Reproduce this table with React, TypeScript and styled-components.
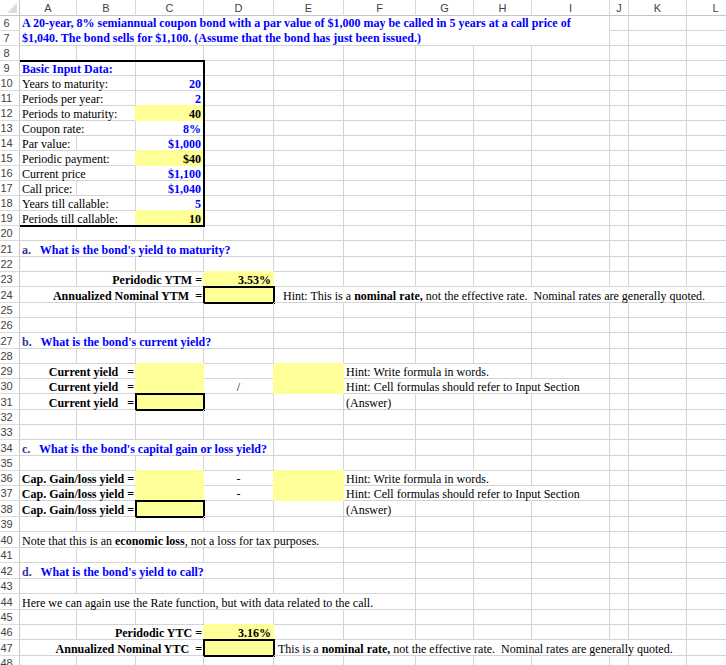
import React from "react";
import styled, { createGlobalStyle, css } from "styled-components";

const GlobalStyle = createGlobalStyle`
  html, body { margin: 0; padding: 0; background: #ffffff; }
  body { overflow: hidden; }
`;

const COLS = [57, 59, 68, 70, 70, 72, 58, 58, 78, 19, 58, 58];
const LETTERS = ["A", "B", "C", "D", "E", "F", "G", "H", "I", "J", "K", "L"];
const GRID = "#d4d4d4";
const YELLOW = "#ffff99";

type Tone = "blue" | "black";
type Align = "left" | "right" | "center";

interface CellSpec {
  span?: number;
  rowSpan?: number;
  text?: React.ReactNode;
  align?: Align;
  bold?: boolean;
  tone?: Tone;
  fill?: boolean;
  boxed?: boolean;
  pl?: number;
  pr?: number;
  wrap?: boolean;
}

interface RowSpec {
  n: number;
  h: number;
  start?: number;
  cells: CellSpec[];
}

const Viewport = styled.div`
  width: 726px;
  height: 665px;
  overflow: hidden;
  background: #ffffff;
`;

const Sheet = styled.div<{ $rows: string }>`
  display: grid;
  grid-template-columns: 20px ${COLS.map((c) => `${c}px`).join(" ")};
  grid-template-rows: 16px ${(p) => p.$rows};
  width: max-content;
  font-family: "Liberation Serif", "Times New Roman", serif;
  font-size: 12px;
  color: #000000;
`;

const Corner = styled.div`
  grid-row: 1;
  grid-column: 1;
  box-sizing: border-box;
  border-right: 1px solid #c6c6c6;
  border-bottom: 1px solid #c6c6c6;
  display: flex;
  align-items: flex-end;
  justify-content: flex-end;
  padding: 0 2px 2px 0;
`;

const Triangle = styled.div`
  width: 0;
  height: 0;
  border-left: 10px solid transparent;
  border-bottom: 10px solid #dcdcdc;
`;

const ColHead = styled.div<{ $col: number }>`
  grid-row: 1;
  grid-column: ${(p) => p.$col};
  box-sizing: border-box;
  border-right: 1px solid #d8d8d8;
  border-bottom: 1px solid #c6c6c6;
  display: flex;
  align-items: center;
  justify-content: center;
  font-family: "Liberation Sans", Arial, sans-serif;
  font-size: 11px;
  color: #444444;
`;

const RowHead = styled.div<{ $row: number }>`
  grid-row: ${(p) => p.$row};
  grid-column: 1;
  box-sizing: border-box;
  border-right: 1px solid #c6c6c6;
  border-bottom: 1px solid #dcdcdc;
  display: flex;
  align-items: center;
  justify-content: center;
  padding-right: 6px;
  font-family: "Liberation Sans", Arial, sans-serif;
  font-size: 11px;
  color: #444444;
`;

const Cell = styled.div<{
  $row: number;
  $col: number;
  $span: number;
  $rowSpan: number;
  $align: Align;
  $bold: boolean;
  $tone: Tone;
  $fill: boolean;
  $boxed: boolean;
  $pl: number;
  $pr: number;
  $wrap: boolean;
}>`
  grid-row: ${(p) => p.$row} / span ${(p) => p.$rowSpan};
  grid-column: ${(p) => p.$col} / span ${(p) => p.$span};
  box-sizing: border-box;
  min-width: 0;
  border-right: 1px solid ${GRID};
  border-bottom: 1px solid ${GRID};
  display: flex;
  align-items: ${(p) => (p.$wrap ? "flex-start" : "flex-end")};
  justify-content: ${(p) =>
    p.$align === "right" ? "flex-end" : p.$align === "center" ? "center" : "flex-start"};
  padding: 0 ${(p) => p.$pr}px 0 ${(p) => p.$pl}px;
  line-height: ${(p) => (p.$wrap ? "15px" : "12px")};
  white-space: ${(p) => (p.$wrap ? "normal" : "pre")};
  font-weight: ${(p) => (p.$bold ? "bold" : "normal")};
  color: ${(p) => (p.$tone === "blue" ? "#0000ff" : "#000000")};
  ${(p) =>
    p.$fill &&
    css`
      background: ${YELLOW};
      border-color: ${YELLOW};
      box-shadow: -1px 0 0 ${YELLOW}, 0 -1px 0 ${YELLOW};
    `}
  ${(p) =>
    p.$boxed &&
    css`
      outline: 2px solid #000000;
      outline-offset: -1px;
    `}
`;

const CellText = styled.span`
  display: block;
`;

const Strong = styled.b`
  font-weight: bold;
`;

const QLabel = styled.span`
  color: #333399;
`;

const InputFrame = styled.div`
  grid-row: 5 / 16;
  grid-column: 2 / 5;
  margin: -1px -1px -1px 0;
  border: 2px solid #000000;
  border-left: none;
  pointer-events: none;
`;

const q = (label: string, text: string, span: number): CellSpec => ({
  span,
  bold: true,
  tone: "blue",
  text: (
    <>
      <QLabel>{label}</QLabel>
      {"   " + text}
    </>
  ),
});

const inputRow = (n: number, label: string, value: string, labelSpan: number, computed = false): RowSpec => ({
  n,
  h: 15,
  cells: [
    { span: labelSpan, text: label },
    ...(labelSpan === 1 ? [{}] : []),
    computed
      ? { text: value, align: "right" as Align, bold: true, fill: true }
      : { text: value, align: "right" as Align, bold: true, tone: "blue" as Tone },
  ],
});

const eqLabel = (text: string, span: number): CellSpec => ({ span, text, align: "right", bold: true, pr: 1 });

const hintNominal = (prefix: string) => (
  <>
    {prefix}
    <Strong>nominal rate,</Strong>
    {" not the effective rate.  Nominal rates are generally quoted."}
  </>
);

const ROWS: RowSpec[] = [
  {
    n: 6,
    h: 15,
    cells: [
      {
        span: 9,
        rowSpan: 2,
        wrap: true,
        bold: true,
        tone: "blue",
        text:
          "A 20-year, 8% semiannual coupon bond with a par value of $1,000 may be called in 5 years at a call price of $1,040. The bond sells for $1,100. (Assume that the bond has just been issued.)",
      },
    ],
  },
  { n: 7, h: 15, start: 9, cells: [] },
  { n: 8, h: 15, cells: [] },
  { n: 9, h: 15, cells: [{ span: 2, text: "Basic Input Data:", bold: true, tone: "blue" }] },
  inputRow(10, "Years to maturity:", "20", 2),
  inputRow(11, "Periods per year:", "2", 2),
  inputRow(12, "Periods to maturity:", "40", 2, true),
  inputRow(13, "Coupon rate:", "8%", 2),
  inputRow(14, "Par value:", "$1,000", 1),
  inputRow(15, "Periodic payment:", "$40", 2, true),
  inputRow(16, "Current price", "$1,100", 2),
  inputRow(17, "Call price:", "$1,040", 1),
  inputRow(18, "Years till callable:", "5", 2),
  inputRow(19, "Periods till callable:", "10", 2, true),
  { n: 20, h: 15, cells: [] },
  { n: 21, h: 16, cells: [q("a.", "What is the bond's yield to maturity?", 4)] },
  { n: 22, h: 15, cells: [] },
  {
    n: 23,
    h: 15,
    cells: [{}, eqLabel("Peridodic YTM =", 2), { text: "3.53%", align: "right", bold: true, fill: true }],
  },
  {
    n: 24,
    h: 16,
    cells: [
      eqLabel("Annualized Nominal YTM  =", 3),
      { fill: true, boxed: true },
      { span: 8, text: hintNominal("Hint: This is a "), pl: 9 },
    ],
  },
  { n: 25, h: 15, cells: [] },
  { n: 26, h: 15, cells: [] },
  { n: 27, h: 16, cells: [q("b.", "What is the bond's current yield?", 4)] },
  { n: 28, h: 15, cells: [] },
  {
    n: 29,
    h: 15,
    cells: [
      eqLabel("Current yield   =", 2),
      { fill: true },
      {},
      { fill: true },
      { span: 3, text: "Hint: Write formula in words." },
    ],
  },
  {
    n: 30,
    h: 15,
    cells: [
      eqLabel("Current yield   =", 2),
      { fill: true },
      { text: "/", align: "center" },
      { fill: true },
      { span: 4, text: "Hint: Cell formulas should refer to Input Section" },
    ],
  },
  {
    n: 31,
    h: 16,
    cells: [eqLabel("Current yield   =", 2), { fill: true, boxed: true }, {}, {}, { text: "(Answer)" }],
  },
  { n: 32, h: 15, cells: [] },
  { n: 33, h: 15, cells: [] },
  { n: 34, h: 16, cells: [q("c.", "What is the bond's capital gain or loss yield?", 4)] },
  { n: 35, h: 15, cells: [] },
  {
    n: 36,
    h: 15,
    cells: [
      eqLabel("Cap. Gain/loss yield =", 2),
      { fill: true },
      { text: "-", align: "center" },
      { fill: true },
      { span: 3, text: "Hint: Write formula in words." },
    ],
  },
  {
    n: 37,
    h: 15,
    cells: [
      eqLabel("Cap. Gain/loss yield =", 2),
      { fill: true },
      { text: "-", align: "center" },
      { fill: true },
      { span: 4, text: "Hint: Cell formulas should refer to Input Section" },
    ],
  },
  {
    n: 38,
    h: 16,
    cells: [eqLabel("Cap. Gain/loss yield =", 2), { fill: true, boxed: true }, {}, {}, { text: "(Answer)" }],
  },
  { n: 39, h: 15, cells: [] },
  {
    n: 40,
    h: 16,
    cells: [
      {
        span: 5,
        text: (
          <>
            {"Note that this is an "}
            <Strong>economic loss</Strong>
            {", not a loss for tax purposes."}
          </>
        ),
      },
    ],
  },
  { n: 41, h: 15, cells: [] },
  { n: 42, h: 16, cells: [q("d.", "What is the bond's yield to call?", 4)] },
  { n: 43, h: 15, cells: [] },
  {
    n: 44,
    h: 16,
    cells: [{ span: 6, text: "Here we can again use the Rate function, but with data related to the call." }],
  },
  { n: 45, h: 15, cells: [] },
  {
    n: 46,
    h: 15,
    cells: [{}, eqLabel("Peridodic YTC =", 2), { text: "3.16%", align: "right", bold: true, fill: true }],
  },
  {
    n: 47,
    h: 16,
    cells: [
      eqLabel("Annualized Nominal YTC  =", 3),
      { fill: true, boxed: true },
      { span: 7, text: hintNominal("This is a "), pl: 4 },
    ],
  },
  { n: 48, h: 15, cells: [] },
  { n: 49, h: 15, cells: [] },
];

export default function App() {
  const template = ROWS.map((r) => `${r.h}px`).join(" ");
  const items: React.ReactNode[] = [];

  items.push(
    <Corner key="corner">
      <Triangle />
    </Corner>
  );
  LETTERS.forEach((l, i) =>
    items.push(
      <ColHead key={`col-${l}`} $col={i + 2}>
        {l}
      </ColHead>
    )
  );

  ROWS.forEach((r, ri) => {
    const gr = ri + 2;
    items.push(
      <RowHead key={`rh-${r.n}`} $row={gr}>
        {r.n}
      </RowHead>
    );
    let col = r.start ?? 0;
    const cells: CellSpec[] = [...r.cells];
    let used = col + cells.reduce((s, c) => s + (c.span ?? 1), 0);
    while (used < 12) {
      cells.push({});
      used += 1;
    }
    cells.forEach((c, ci) => {
      const span = c.span ?? 1;
      items.push(
        <Cell
          key={`c-${r.n}-${ci}`}
          $row={gr}
          $col={col + 2}
          $span={span}
          $rowSpan={c.rowSpan ?? 1}
          $align={c.align ?? "left"}
          $bold={!!c.bold}
          $tone={c.tone ?? "black"}
          $fill={!!c.fill}
          $boxed={!!c.boxed}
          $pl={c.pl ?? 2}
          $pr={c.pr ?? 2}
          $wrap={!!c.wrap}
        >
          {c.text != null && <CellText>{c.text}</CellText>}
        </Cell>
      );
      col += span;
    });
  });

  items.push(<InputFrame key="frame" />);

  return (
    <>
      <GlobalStyle />
      <Viewport>
        <Sheet $rows={template}>{items}</Sheet>
      </Viewport>
    </>
  );
}
